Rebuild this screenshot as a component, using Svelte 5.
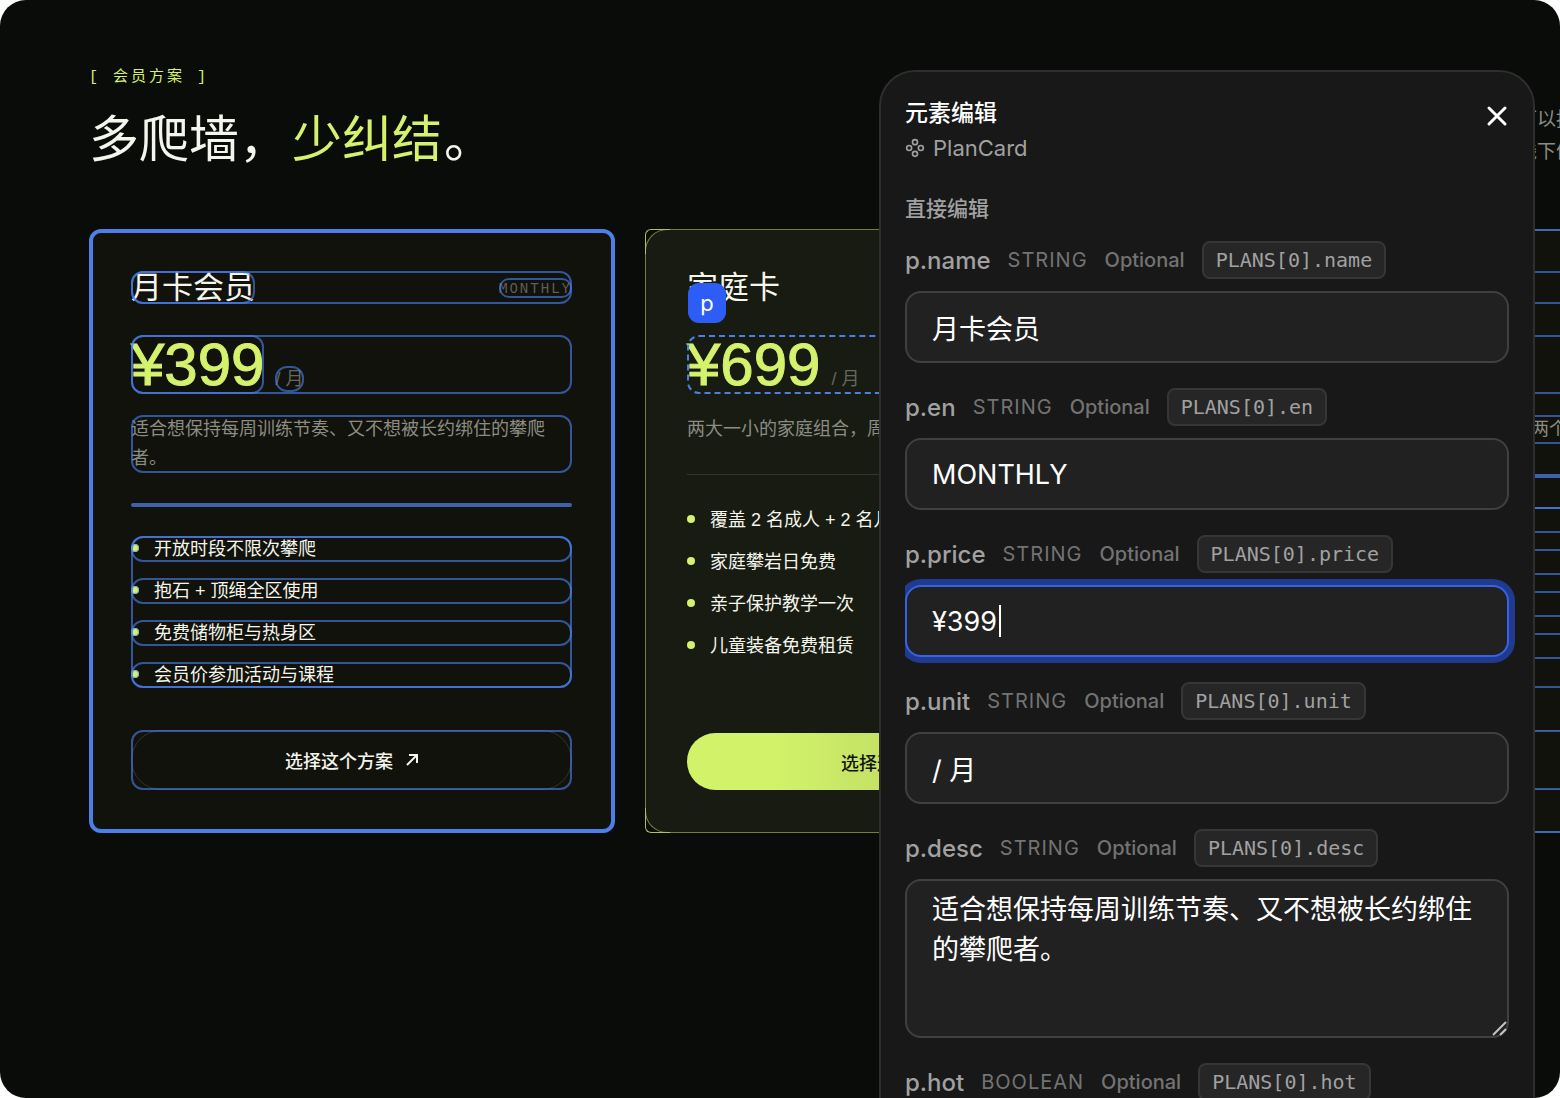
<script>
    // Membership plans shown on the page
    let plans = [
        {
            name: '月卡会员',
            en: 'MONTHLY',
            price: '¥399',
            unit: '/ 月',
            desc: '适合想保持每周训练节奏、又不想被长约绑住的攀爬者。',
            perks: ['开放时段不限次攀爬', '抱石 + 顶绳全区使用', '免费储物柜与热身区', '会员价参加活动与课程'],
            state: 'selected'
        },
        {
            name: '家庭卡',
            en: 'FAMILY',
            price: '¥699',
            unit: '/ 月',
            desc: '两大一小的家庭组合，周末一起来爬墙。',
            perks: ['覆盖 2 名成人 + 2 名儿童', '家庭攀岩日免费', '亲子保护教学一次', '儿童装备免费租赁'],
            state: 'hot'
        },
        {
            name: '学生卡',
            en: 'STUDENT',
            price: '¥299',
            unit: '/ 月',
            desc: '适合每周固定来馆练习的学生，任选两个时段。',
            perks: ['工作日开放时段', '抱石区使用', '免费储物柜', '新生体验课一次'],
            state: 'linked'
        }
    ];

    // Editable props of the selected element
    const fields = [
        { key: 'name', type: 'STRING' },
        { key: 'en', type: 'STRING' },
        { key: 'price', type: 'STRING' },
        { key: 'unit', type: 'STRING' },
        { key: 'desc', type: 'STRING', multiline: true },
        { key: 'hot', type: 'BOOLEAN' }
    ];

    let active = 'price';
    let hot = false;
    let open = true;
</script>

<main class="page">
    <section class="plans">
        <header class="head">
            <div>
                <p class="eyebrow">[ 会员方案 ]</p>
                <h2>多爬墙，<em>少纠结</em>。</h2>
            </div>
            <p class="intro">按月、按季或全家一起来，都可以按自己的节奏选择。<br />不确定的话，先来现场做一次线下体验。</p>
        </header>

        <div class="cards">
            {#each plans as plan}
                <article class="card {plan.state}">
                    <div class="card-head trace">
                        <h3 class="trace">{plan.name}</h3>
                        <span class="en trace">{plan.en}</span>
                    </div>
                    <div class="price-row trace">
                        {#if plan.state === 'hot'}
                            <span class="tag">p</span>
                        {/if}
                        <strong class="price trace">{plan.price}</strong>
                        <span class="unit trace">{plan.unit}</span>
                    </div>
                    <p class="desc trace">{plan.desc}</p>
                    <div class="divider"></div>
                    <ul class="perks trace">
                        {#each plan.perks as perk}
                            <li class="trace"><i class="dot"></i>{perk}</li>
                        {/each}
                    </ul>
                    <div class="cta-wrap trace">
                        <button class="cta" type="button">
                            选择这个方案
                            <svg viewBox="0 0 12 12" width="12" height="12" aria-hidden="true">
                                <path d="M1 11 L11 1 M3 1 H11 V9" />
                            </svg>
                        </button>
                    </div>
                </article>
            {/each}
        </div>
    </section>

    {#if open}
        <aside class="panel">
            <header class="panel-head">
                <div>
                    <h1>元素编辑</h1>
                    <p class="component">
                        <svg viewBox="0 0 24 24" width="20" height="20" aria-hidden="true">
                            <circle cx="12" cy="5" r="3" />
                            <circle cx="12" cy="19" r="3" />
                            <circle cx="5" cy="12" r="3" />
                            <circle cx="19" cy="12" r="3" />
                        </svg>
                        PlanCard
                    </p>
                </div>
                <button class="close" type="button" aria-label="关闭" on:click={() => (open = false)}>
                    <svg viewBox="0 0 24 24" width="24" height="24" aria-hidden="true">
                        <path d="M4 4 L20 20 M20 4 L4 20" />
                    </svg>
                </button>
            </header>

            <h2 class="group-title">直接编辑</h2>

            <div class="fields">
                {#each fields as field}
                    <div class="field">
                        <div class="meta">
                            <label for="field-{field.key}">p.{field.key}</label>
                            <span class="type">{field.type}</span>
                            <span class="optional">Optional</span>
                            <code>PLANS[0].{field.key}</code>
                        </div>
                        {#if field.type === 'BOOLEAN'}
                            <input id="field-{field.key}" type="checkbox" bind:checked={hot} />
                        {:else if field.multiline}
                            <div class="control">
                                <textarea id="field-{field.key}" bind:value={plans[0][field.key]}></textarea>
                                <svg class="grip" viewBox="0 0 16 16" width="16" height="16" aria-hidden="true">
                                    <path d="M1 15 L14 2 M8 15 L14 9" />
                                </svg>
                            </div>
                        {:else}
                            <div class="control">
                                <input
                                    id="field-{field.key}"
                                    class:active={active === field.key}
                                    type="text"
                                    bind:value={plans[0][field.key]}
                                    on:focus={() => (active = field.key)}
                                />
                                {#if active === field.key}
                                    <span class="caret"></span>
                                {/if}
                            </div>
                        {/if}
                    </div>
                {/each}
            </div>
        </aside>
    {/if}
</main>

<style>
    :global(body) {
        background: #fff;
    }

    .page {
        --lime: #d4f26d;
        --ink: #f4f5ec;
        --trace: rgba(75, 132, 247, 0.6);
        position: relative;
        height: 100vh;
        overflow: hidden;
        border-radius: 26px;
        background: #0a0c09;
        color: var(--ink);
        font-family: "Liberation Sans", "Noto Sans CJK SC", sans-serif;
    }

    h1, h2, h3, p, ul {
        margin: 0;
        padding: 0;
        font-weight: 400;
    }

    button {
        font: inherit;
        cursor: pointer;
    }

    svg {
        fill: none;
        stroke: currentColor;
        stroke-width: 2;
    }

    /* The plan list runs on past the right edge of the window */
    .plans {
        box-sizing: border-box;
        width: calc(100% + 167px);
        padding: 68px 0 0 89px;
    }

    .head {
        display: flex;
        justify-content: space-between;
        align-items: flex-end;
        margin-bottom: 61px;
    }

    .eyebrow {
        margin-bottom: 24px;
        color: var(--lime);
        font-family: "Liberation Mono", "Noto Sans CJK SC", monospace;
        font-size: 15px;
        line-height: 20px;
        letter-spacing: 3px;
    }

    .head h2 {
        font-size: 50px;
        line-height: 56px;
    }

    .head em {
        margin: 0 2px 0 3px;
        color: var(--lime);
        font-style: normal;
    }

    .intro {
        color: #8b8c84;
        font-size: 19px;
        line-height: 32px;
        white-space: nowrap;
    }

    .cards {
        display: grid;
        grid-template-columns: repeat(3, 1fr);
        gap: 30px;
    }

    .card {
        position: relative;
        display: flex;
        flex-direction: column;
        padding: 42px 43px 43px 42px;
        background: #11120b;
    }

    .selected,
    .linked {
        border-radius: 12px;
        outline: 4px solid #4d7fe8;
        outline-offset: -4px;
    }

    .linked {
        outline: 2px solid #4468b8;
        outline-offset: -2px;
    }

    .hot {
        border-radius: 22px;
        background: #181b12;
        box-shadow: inset 0 0 0 1px #737f3e;
    }

    .hot::before,
    .hot::after {
        content: "";
        position: absolute;
        left: 0;
        width: 24px;
        height: 24px;
        border-left: 1px solid #aebf62;
    }

    .hot::before {
        top: 0;
        border-top: 1px solid #aebf62;
        border-top-left-radius: 6px;
    }

    .hot::after {
        bottom: 0;
        border-bottom: 1px solid #aebf62;
        border-bottom-left-radius: 6px;
    }

    .selected .trace,
    .linked .trace {
        border-radius: 12px;
        outline: 2px solid var(--trace);
        outline-offset: -2px;
    }

    .card-head {
        display: flex;
        justify-content: space-between;
        align-items: center;
    }

    h3 {
        font-size: 31px;
        line-height: 33px;
    }

    .en {
        color: #5c5d54;
        font-family: "DejaVu Sans Mono", monospace;
        font-size: 14px;
        line-height: 20px;
        letter-spacing: 2px;
    }

    .price-row {
        position: relative;
        display: flex;
        align-items: baseline;
        gap: 11px;
        margin-top: 31px;
    }

    .hot .price-row {
        border-radius: 12px;
        outline: 2px dashed #4a7fe8;
        outline-offset: -2px;
    }

    .price {
        color: var(--lime);
        font-size: 60px;
        font-weight: 400;
        line-height: 59px;
        -webkit-text-stroke: 1px var(--lime);
    }

    .unit {
        color: #66675e;
        font-size: 18px;
        line-height: 26px;
    }

    .tag {
        position: absolute;
        top: -52px;
        left: 1px;
        width: 38px;
        border-radius: 11px;
        background: #2d5df6;
        color: #fff;
        font-family: Inter, sans-serif;
        font-size: 22px;
        line-height: 40px;
        text-align: center;
    }

    .desc {
        margin-top: 21px;
        color: #8b8c84;
        font-size: 18px;
        line-height: 29px;
    }

    .divider {
        height: 1px;
        margin: 30px 0 32px;
        background: #33352d;
    }

    .selected .divider,
    .linked .divider {
        height: 4px;
        margin: 30px 0 29px;
        border-radius: 2px;
        background: #3d62ab;
    }

    .perks {
        display: flex;
        flex: 1;
        flex-direction: column;
        gap: 16px;
        list-style: none;
    }

    .perks li {
        display: flex;
        align-items: center;
        gap: 15px;
        font-size: 18px;
        line-height: 26px;
    }

    .dot {
        width: 8px;
        height: 8px;
        margin-bottom: 3px;
        border-radius: 50%;
        background: var(--lime);
    }

    .selected .dot {
        outline: 1px solid rgba(75, 132, 247, 0.6);
        outline-offset: -1px;
    }

    .cta-wrap {
        margin-top: 42px;
    }

    .cta {
        display: flex;
        justify-content: center;
        align-items: center;
        gap: 13px;
        width: 100%;
        height: 60px;
        border: 1px solid #33352d;
        border-radius: 30px;
        background: transparent;
        color: var(--ink);
        font-size: 18px;
        font-weight: 500;
    }

    .hot .cta-wrap {
        padding-top: 3px;
    }

    .hot .cta {
        height: 57px;
        border: 0;
        background: linear-gradient(90deg, #d2f26a 20%, #b0c95c 80%);
        color: #11140a;
    }

    /* Floating props editor */
    .panel {
        position: absolute;
        top: 70px;
        right: 25px;
        box-sizing: border-box;
        width: 42%;
        min-width: 656px;
        padding: 25px 24px 40px;
        border: 2px solid #2e2e2e;
        border-radius: 36px;
        background: #181818;
        color: #fff;
        color-scheme: dark;
        font-family: Inter, "Noto Sans CJK SC", sans-serif;
    }

    .panel-head {
        display: flex;
        justify-content: space-between;
        align-items: flex-start;
    }

    h1 {
        font-size: 23px;
        font-weight: 500;
        line-height: 33px;
    }

    .component {
        display: flex;
        align-items: center;
        gap: 8px;
        color: #a1a1a1;
        font-size: 22px;
        line-height: 36px;
    }

    .close {
        display: flex;
        margin-top: 7px;
        padding: 0;
        border: 0;
        background: none;
        color: #fff;
    }

    .close svg {
        stroke-width: 3;
        stroke-linecap: round;
    }

    .group-title {
        margin: 29px 0 18px;
        color: #a1a1a1;
        font-size: 21px;
        font-weight: 500;
        line-height: 28px;
    }

    /* Room on the right for the focus ring */
    .fields {
        display: flex;
        flex-direction: column;
        gap: 25px;
        margin-right: -8px;
        padding-right: 8px;
        overflow: hidden;
    }

    .field {
        display: flex;
        flex-direction: column;
        gap: 12px;
    }

    .meta {
        display: flex;
        align-items: center;
        gap: 17px;
        color: #737373;
        font-size: 20px;
    }

    label {
        color: #a1a1a1;
        font-size: 24px;
        font-weight: 500;
    }

    .type {
        letter-spacing: 1px;
    }

    .optional {
        font-weight: 500;
    }

    code {
        padding: 0 12px;
        border: 2px solid #363636;
        border-radius: 8px;
        background: #262626;
        color: #a1a1a1;
        font-family: "DejaVu Sans Mono", monospace;
        font-size: 20px;
        line-height: 34px;
    }

    .control {
        position: relative;
    }

    input[type="text"],
    textarea {
        display: block;
        box-sizing: border-box;
        width: 100%;
        border: 2px solid #404040;
        border-radius: 16px;
        outline: none;
        background: #212121;
        color: #fff;
        font-family: inherit;
        font-size: 27px;
    }

    input[type="text"] {
        height: 72px;
        padding: 0 25px;
    }

    textarea {
        height: 159px;
        padding: 9px 25px;
        line-height: 40px;
        resize: vertical;
    }

    textarea::-webkit-resizer {
        background: transparent;
    }

    .grip {
        position: absolute;
        right: 1px;
        bottom: 2px;
        color: #c4c4c4;
        pointer-events: none;
    }

    input[type="checkbox"] {
        width: 32px;
        height: 32px;
        margin: 0;
    }

    input.active {
        border-color: #3663e6;
        box-shadow: 0 0 0 6px #203a90;
        caret-color: transparent;
    }

    .caret {
        position: absolute;
        top: 20px;
        left: 94px;
        width: 2px;
        height: 32px;
        background: #fff;
    }
</style>
